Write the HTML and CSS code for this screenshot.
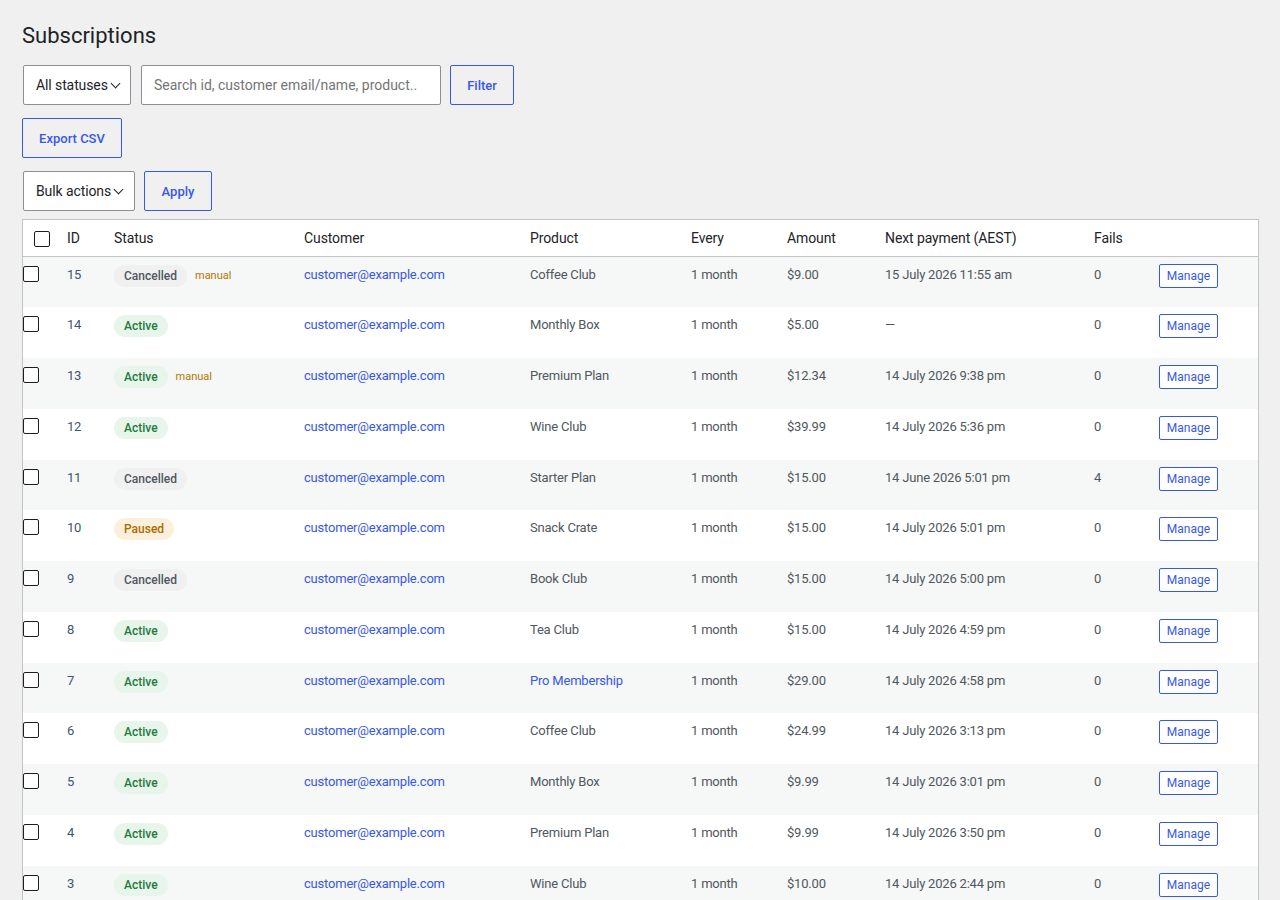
FILE: index.html
```html
<!DOCTYPE html>
<html lang="en">
<head>
  <meta charset="UTF-8" />
  <meta name="viewport" content="width=device-width, initial-scale=1.0"/>
  <title>Subscriptions</title>
  <link rel="stylesheet" href="styles.css">
</head>
<body>

  <div class="wrap">
    <h1 class="page-title">Subscriptions</h1>

    <div class="toolbar">
      <div class="select select-status">All statuses <span class="chev"></span></div>
      <div class="search">Search id, customer email/name, product..</div>
      <button class="btn btn-filter">Filter</button>
    </div>

    <div class="toolbar">
      <button class="btn btn-export">Export CSV</button>
    </div>

    <div class="toolbar">
      <div class="select select-bulk">Bulk actions <span class="chev"></span></div>
      <button class="btn btn-apply">Apply</button>
    </div>

    <table class="subs">
      <thead>
        <tr>
          <th class="check-col"><span class="checkbox"></span></th>
          <th class="col-id">ID</th>
          <th class="col-status">Status</th>
          <th class="col-customer">Customer</th>
          <th class="col-product">Product</th>
          <th class="col-every">Every</th>
          <th class="col-amount">Amount</th>
          <th class="col-next">Next payment (AEST)</th>
          <th class="col-fails">Fails</th>
          <th class="col-action"></th>
        </tr>
      </thead>
      <tbody id="rows"></tbody>
    </table>
  </div>

  <script>
    const rows = [
      { id: 15, status: "Cancelled", manual: true, product: "Coffee Club", amount: "$9.00", next: "15 July 2026 11:55 am", fails: 0 },
      { id: 14, status: "Active", product: "Monthly Box", amount: "$5.00", next: "\u2014", fails: 0 },
      { id: 13, status: "Active", manual: true, product: "Premium Plan", amount: "$12.34", next: "14 July 2026 9:38 pm", fails: 0 },
      { id: 12, status: "Active", product: "Wine Club", amount: "$39.99", next: "14 July 2026 5:36 pm", fails: 0 },
      { id: 11, status: "Cancelled", product: "Starter Plan", amount: "$15.00", next: "14 June 2026 5:01 pm", fails: 4 },
      { id: 10, status: "Paused", product: "Snack Crate", amount: "$15.00", next: "14 July 2026 5:01 pm", fails: 0 },
      { id: 9, status: "Cancelled", product: "Book Club", amount: "$15.00", next: "14 July 2026 5:00 pm", fails: 0 },
      { id: 8, status: "Active", product: "Tea Club", amount: "$15.00", next: "14 July 2026 4:59 pm", fails: 0 },
      { id: 7, status: "Active", product: "Pro Membership", link: true, amount: "$29.00", next: "14 July 2026 4:58 pm", fails: 0 },
      { id: 6, status: "Active", product: "Coffee Club", amount: "$24.99", next: "14 July 2026 3:13 pm", fails: 0 },
      { id: 5, status: "Active", product: "Monthly Box", amount: "$9.99", next: "14 July 2026 3:01 pm", fails: 0 },
      { id: 4, status: "Active", product: "Premium Plan", amount: "$9.99", next: "14 July 2026 3:50 pm", fails: 0 },
      { id: 3, status: "Active", product: "Wine Club", amount: "$10.00", next: "14 July 2026 2:44 pm", fails: 0 }
    ];

    const tbody = document.getElementById("rows");

    rows.forEach((r) => {
      const tr = document.createElement("tr");
      const product = r.link ? `<a href="#">${r.product}</a>` : r.product;
      const manual = r.manual ? `<span class="manual">manual</span>` : "";
      tr.innerHTML = `
        <td class="check-col"><span class="checkbox"></span></td>
        <td class="col-id">${r.id}</td>
        <td class="col-status"><span class="badge badge-${r.status.toLowerCase()}">${r.status}</span>${manual}</td>
        <td><a href="#">customer@example.com</a></td>
        <td>${product}</td>
        <td>1 month</td>
        <td>${r.amount}</td>
        <td>${r.next}</td>
        <td>${r.fails}</td>
        <td><button class="btn-manage">Manage</button></td>`;
      tbody.appendChild(tr);
    });
  </script>
</body>
</html>
```

FILE: styles.css
```css
body {
  margin: 0;
  background: #f0f0f1;
  color: #50575e;
  font-family: Roboto, "Noto Sans", sans-serif;
  font-size: 13px;
}

.wrap {
  padding: 0 21px 0 22px;
}

.page-title {
  margin: 0;
  padding: 21px 0 15px;
  font-size: 22px;
  font-weight: 400;
  line-height: 29px;
  color: #1d2327;
}

.toolbar {
  display: flex;
  gap: 10px;
  margin-bottom: 13px;
}

.toolbar:nth-of-type(3) {
  margin-bottom: 8px;
}

.select {
  height: 40px;
  box-sizing: border-box;
  padding: 0 0 0 12px;
  display: flex;
  align-items: center;
  gap: 3px;
  background: #fff;
  border: 1px solid #8c8f94;
  border-radius: 2px;
  color: #1d2327;
  font-size: 14px;
  letter-spacing: -0.1px;
  margin-left: 1px;
}

.select-status { width: 108px; }
.select-bulk { width: 112px; }

.chev {
  width: 6px;
  height: 6px;
  border-right: 1.6px solid #1d2327;
  border-bottom: 1.6px solid #1d2327;
  transform: rotate(45deg);
  margin: -4px 0 0 1px;
}

.search {
  width: 300px;
  height: 40px;
  box-sizing: border-box;
  padding: 0 12px;
  display: flex;
  align-items: center;
  background: #fff;
  border: 1px solid #8c8f94;
  border-radius: 2px;
  color: #757575;
  font-size: 14px;
}

.btn {
  height: 40px;
  box-sizing: border-box;
  padding: 0 12px;
  background: transparent;
  border: 1px solid #3858e9;
  border-radius: 2px;
  color: #3858e9;
  font-family: inherit;
  font-size: 13px;
  font-weight: 500;
}

.btn-filter { width: 64px; margin-left: -1px; }
.btn-export { width: 100px; }
.btn-apply { width: 68px; margin-left: -1px; }

.subs {
  width: 100%;
  border-collapse: collapse;
  background: #fff;
  border: 1px solid #c3c4c7;
  table-layout: fixed;
  letter-spacing: -0.2px;
}

.subs th {
  height: 36px;
  padding: 0 10px;
  text-align: left;
  font-size: 14px;
  font-weight: 400;
  color: #1d2327;
  border-bottom: 1px solid #c3c4c7;
  letter-spacing: -0.1px;
}

.subs td {
  height: 50.75px;
  box-sizing: border-box;
  padding: 8px 10px;
  vertical-align: top;
  line-height: 20px;
}

.subs tbody tr:nth-child(odd) {
  background: #f6f7f7;
}

.subs .check-col { width: 16px; }
.subs th.check-col { padding: 0 7px 0 11px; }
.subs td.check-col { padding: 9px 18px 0 0; }

.col-id { width: 27px; }
.col-status { width: 170px; }
.col-customer { width: 206px; }
.col-product { width: 141px; }
.col-every { width: 76px; }
.col-amount { width: 78px; }
.col-next { width: 189px; }
.col-fails { width: 45px; }

td.col-id { color: #3f5670; }

.checkbox {
  display: block;
  width: 16px;
  height: 16px;
  box-sizing: border-box;
  border: 1px solid #1e1e1e;
  border-radius: 2px;
  background: #fff;
}

.subs th .checkbox { margin-top: 2px; }

a {
  color: #3858e9;
  text-decoration: none;
}

.badge {
  display: inline-block;
  height: 22px;
  line-height: 22px;
  padding: 0 10px;
  border-radius: 11px;
  font-size: 12px;
  font-weight: 500;
  letter-spacing: 0;
  vertical-align: top;
}

.badge-active {
  background: #e7f5ea;
  color: #1f7a3e;
}

.badge-cancelled {
  background: #f0f0f1;
  color: #50575e;
}

.badge-paused {
  background: #fcf0dc;
  color: #a86d00;
}

.manual {
  margin-left: 8px;
  font-size: 11px;
  line-height: 22px;
  letter-spacing: 0;
  color: #b07800;
}

.btn-manage {
  height: 24px;
  width: 59px;
  padding: 0;
  margin-top: -1px;
  background: #fff;
  border: 1px solid #3858e9;
  border-radius: 2px;
  color: #3858e9;
  font-family: inherit;
  font-size: 12px;
  vertical-align: top;
}
```
